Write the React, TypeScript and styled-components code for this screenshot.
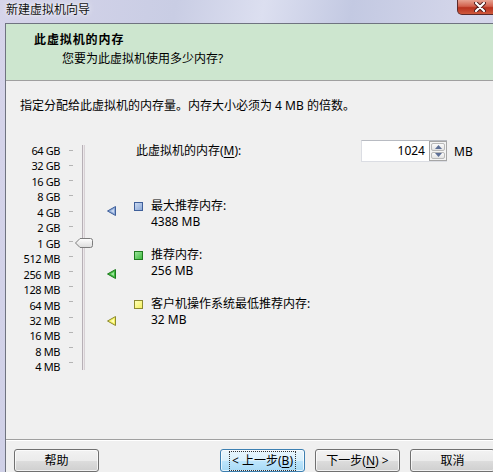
import React from "react";
import styled, { createGlobalStyle } from "styled-components";

const Global = createGlobalStyle`
  html, body { margin: 0; padding: 0; overflow: hidden; background: #d8d8ea; }
  body { font-family: "Noto Sans", "Noto Sans CJK SC", sans-serif; font-size: 12px; color: #000; }
  * { box-sizing: border-box; }
`;

const ROW = 15.46;
const SCALE_TOP = 3;
const scaleLabels = ["64 GB", "32 GB", "16 GB", "8 GB", "4 GB", "2 GB", "1 GB", "512 MB", "256 MB", "128 MB", "64 MB", "32 MB", "16 MB", "8 MB", "4 MB"];
const yFor = (mb: number) => SCALE_TOP + ROW * (16 - Math.log2(mb) + 0.5);

type Tone = "blue" | "green" | "yellow";
const tones: Record<Tone, { fill: string; edge: string; light: string }> = {
  blue: { fill: "#8eaad8", edge: "#3f5f9a", light: "#c9d8f0" },
  green: { fill: "#3fba3f", edge: "#1f7a1f", light: "#9be39b" },
  yellow: { fill: "#f4f060", edge: "#8c8a30", light: "#ffffb8" },
};

const legend: { tone: Tone; title: string; value: string; mb: number }[] = [
  { tone: "blue", title: "最大推荐内存:", value: "4388 MB", mb: 4388 },
  { tone: "green", title: "推荐内存:", value: "256 MB", mb: 256 },
  { tone: "yellow", title: "客户机操作系统最低推荐内存:", value: "32 MB", mb: 32 },
];

const Frame = styled.div`
  width: 505px;
  height: 472px;
  display: flex;
  flex-direction: column;
  background: linear-gradient(100deg, #d6d4ea 0%, #c9cde4 30%, #dcdff0 45%, #c3c9e2 60%, #d4d6ea 80%, #cfd0e6 100%);
  overflow: hidden;
`;

const TitleBar = styled.div`
  height: 23px;
  flex: none;
  display: flex;
  align-items: flex-start;
  justify-content: space-between;
`;

const TitleText = styled.div`
  padding: 2px 0 0 6px;
  line-height: 16px;
  color: #111;
  text-shadow: 0 0 6px rgba(255, 255, 255, 0.9), 0 0 2px rgba(255, 255, 255, 0.9);
`;

const CloseButton = styled.div`
  width: 46px;
  height: 15px;
  margin-right: 2px;
  border: 1px solid #5b2a2a;
  border-top: none;
  border-radius: 0 0 5px 5px;
  background: linear-gradient(#e7a291 0%, #d2614d 45%, #b8321f 55%, #cf5a3c 100%);
  display: flex;
  align-items: center;
  justify-content: center;
`;

const Client = styled.div`
  margin-left: 5px;
  width: 498px;
  flex: 1;
  background: #f0f0f0;
  border-left: 1px solid #6f7380;
  border-top: 1px solid #6f7380;
  display: flex;
  flex-direction: column;
`;

const Header = styled.div`
  height: 57px;
  flex: none;
  background: #cde6cf;
  border-bottom: 1px solid #a0a0a0;
  padding: 8px 0 0 28px;
`;

const HeaderTitle = styled.div`
  font-weight: bold;
  line-height: 16px;
  letter-spacing: 0.9px;
`;

const HeaderSub = styled.div`
  margin: 3px 0 0 28px;
  line-height: 16px;
`;

const Body = styled.div`
  height: 358px;
  flex: none;
  padding: 17px 0 0 14px;
`;

const Instruction = styled.div`
  line-height: 16px;
`;

const Main = styled.div`
  margin-top: 26px;
  display: flex;
`;

const Scale = styled.div`
  position: relative;
  width: 114px;
  height: 230px;
  flex: none;
  display: flex;
`;

const LabelCol = styled.div`
  width: 40px;
  padding-top: ${SCALE_TOP}px;
  display: flex;
  flex-direction: column;
  align-items: flex-end;
`;

const ScaleLabel = styled.div`
  height: ${ROW}px;
  line-height: ${ROW}px;
  font-size: 11px;
  letter-spacing: -0.4px;
  white-space: nowrap;
`;

const TickCol = styled.div`
  width: 4px;
  margin-left: 9px;
  padding-top: ${SCALE_TOP}px;
  display: flex;
  flex-direction: column;
`;

const Tick = styled.div`
  height: ${ROW}px;
  display: flex;
  align-items: center;
  &::after {
    content: "";
    width: 4px;
    height: 1px;
    background: #b4b4b4;
  }
`;

const Track = styled.div`
  margin: 5px 0 0 9px;
  width: 3px;
  height: 225px;
  border-left: 1px solid #b7b0b6;
  border-right: 1px solid #d6d0d4;
  background: #ece8ea;
`;

const Thumb = styled.svg`
  position: absolute;
  left: 55px;
  width: 18px;
  height: 10px;
`;

const Marker = styled.svg`
  position: absolute;
  left: 87px;
  width: 9px;
  height: 10px;
`;

const RightPane = styled.div`
  flex: 1;
  display: flex;
  flex-direction: column;
`;

const SpinRow = styled.div`
  display: grid;
  grid-template-columns: 220px 86px auto;
  column-gap: 7px;
  align-items: center;
  height: 22px;
`;

const SpinLabel = styled.div`
  padding-left: 2px;
  line-height: 16px;
`;

const Key = styled.span`
  text-decoration: underline;
  text-underline-offset: 2px;
`;

const SpinBox = styled.div`
  height: 22px;
  display: flex;
  background: #fff;
  border: 1px solid #dbdde3;
  border-top-color: #b8bbc2;
  border-right: none;
`;

const SpinValue = styled.div`
  flex: 1;
  text-align: right;
  padding-right: 4px;
  line-height: 20px;
`;

const SpinButtons = styled.div`
  width: 18px;
  display: flex;
  flex-direction: column;
  border: 1px solid #a6a6a6;
  background: #f4f4f4;
  padding: 1px;
  gap: 1px;
`;

const SpinBtn = styled.div`
  flex: 1;
  border: 1px solid #b9b9b9;
  border-radius: 2px;
  background: linear-gradient(#fbfbfb, #e3e3e3);
  display: flex;
  align-items: center;
  justify-content: center;
`;

const LegendList = styled.div`
  margin-top: 36px;
  display: flex;
  flex-direction: column;
  gap: 17px;
`;

const LegendItem = styled.div`
  display: flex;
  align-items: flex-start;
`;

const Swatch = styled.div<{ $tone: Tone }>`
  width: 9px;
  height: 9px;
  margin-top: 4px;
  margin-right: 8px;
  border: 1px solid ${(p) => tones[p.$tone].edge};
  background: linear-gradient(135deg, ${(p) => tones[p.$tone].light}, ${(p) => tones[p.$tone].fill});
`;

const LegendText = styled.div`
  line-height: 16px;
`;

const Footer = styled.div`
  flex: none;
  border-top: 1px solid #a0a0a0;
  box-shadow: inset 0 1px 0 #ffffff;
  padding: 9px 8px 0 8px;
  display: flex;
  justify-content: space-between;
`;

const ButtonGroup = styled.div`
  display: flex;
  gap: 10px;
`;

const Button = styled.div<{ $focused?: boolean }>`
  width: 85px;
  height: 23px;
  border: 1px solid ${(p) => (p.$focused ? "#3c7fb1" : "#707070")};
  border-radius: 3px;
  background: ${(p) =>
    p.$focused
      ? "linear-gradient(#eaf6fd 0%, #d9f0fc 50%, #bee6fd 51%, #a7d9f5 100%)"
      : "linear-gradient(#f2f2f2 0%, #ebebeb 50%, #dddddd 51%, #cfcfcf 100%)"};
  box-shadow: inset 0 0 0 1px rgba(255, 255, 255, 0.7);
  display: flex;
  align-items: center;
  justify-content: center;
  line-height: 16px;
`;

const FocusText = styled.span`
  outline: 1px dotted #333;
  outline-offset: 1px;
  padding: 0 1px;
`;

function TriangleMarker({ tone, mb }: { tone: Tone; mb: number }) {
  const t = tones[tone];
  return (
    <Marker style={{ top: yFor(mb) - 5 }} viewBox="0 0 9 10">
      <polygon points="8.5,0.5 8.5,9.5 0.5,5" fill={t.fill} stroke={t.edge} strokeWidth="1" />
      <polygon points="7,3 7,7 3.5,5" fill={t.light} />
    </Marker>
  );
}

export default function App() {
  return (
    <>
      <Global />
      <Frame>
        <TitleBar>
          <TitleText>新建虚拟机向导</TitleText>
          <CloseButton>
            <svg width="12" height="10" viewBox="0 0 12 10">
              <path d="M2 1 L10 9 M10 1 L2 9" stroke="#4a1a1a" strokeWidth="4" strokeLinecap="round" />
              <path d="M2 1 L10 9 M10 1 L2 9" stroke="#ffffff" strokeWidth="2.2" strokeLinecap="round" />
            </svg>
          </CloseButton>
        </TitleBar>
        <Client>
          <Header>
            <HeaderTitle>此虚拟机的内存</HeaderTitle>
            <HeaderSub>您要为此虚拟机使用多少内存?</HeaderSub>
          </Header>
          <Body>
            <Instruction>指定分配给此虚拟机的内存量。内存大小必须为 4 MB 的倍数。</Instruction>
            <Main>
              <Scale>
                <LabelCol>
                  {scaleLabels.map((l) => (
                    <ScaleLabel key={l}>{l}</ScaleLabel>
                  ))}
                </LabelCol>
                <TickCol>
                  {scaleLabels.map((l) => (
                    <Tick key={l} />
                  ))}
                </TickCol>
                <Track />
                <Thumb style={{ top: yFor(1024) - 5.5 }} viewBox="0 0 18 10">
                  <defs>
                    <linearGradient id="thumbFill" x1="0" y1="0" x2="0" y2="1">
                      <stop offset="0" stopColor="#ffffff" />
                      <stop offset="1" stopColor="#dcdcdc" />
                    </linearGradient>
                  </defs>
                  <path
                    d="M0.5 5 L5 0.5 L15.5 0.5 Q17.5 0.5 17.5 2.5 L17.5 7.5 Q17.5 9.5 15.5 9.5 L5 9.5 Z"
                    fill="url(#thumbFill)"
                    stroke="#7d7d7d"
                    strokeWidth="1"
                  />
                </Thumb>
                {legend.map((item) => (
                  <TriangleMarker key={item.tone} tone={item.tone} mb={item.mb} />
                ))}
              </Scale>
              <RightPane>
                <SpinRow>
                  <SpinLabel>
                    此虚拟机的内存(<Key>M</Key>):
                  </SpinLabel>
                  <SpinBox>
                    <SpinValue>1024</SpinValue>
                    <SpinButtons>
                      <SpinBtn>
                        <svg width="7" height="4" viewBox="0 0 7 4">
                          <polygon points="0,4 7,4 3.5,0" fill="#5d6f96" />
                        </svg>
                      </SpinBtn>
                      <SpinBtn>
                        <svg width="7" height="4" viewBox="0 0 7 4">
                          <polygon points="0,0 7,0 3.5,4" fill="#5d6f96" />
                        </svg>
                      </SpinBtn>
                    </SpinButtons>
                  </SpinBox>
                  <div>MB</div>
                </SpinRow>
                <LegendList>
                  {legend.map((item) => (
                    <LegendItem key={item.tone}>
                      <Swatch $tone={item.tone} />
                      <LegendText>
                        <div>{item.title}</div>
                        <div>{item.value}</div>
                      </LegendText>
                    </LegendItem>
                  ))}
                </LegendList>
              </RightPane>
            </Main>
          </Body>
          <Footer>
            <Button>帮助</Button>
            <ButtonGroup>
              <Button $focused>
                <FocusText>
                  &lt; 上一步(<Key>B</Key>)
                </FocusText>
              </Button>
              <Button>
                下一步(<Key>N</Key>) &gt;
              </Button>
              <Button>取消</Button>
            </ButtonGroup>
          </Footer>
        </Client>
      </Frame>
    </>
  );
}
